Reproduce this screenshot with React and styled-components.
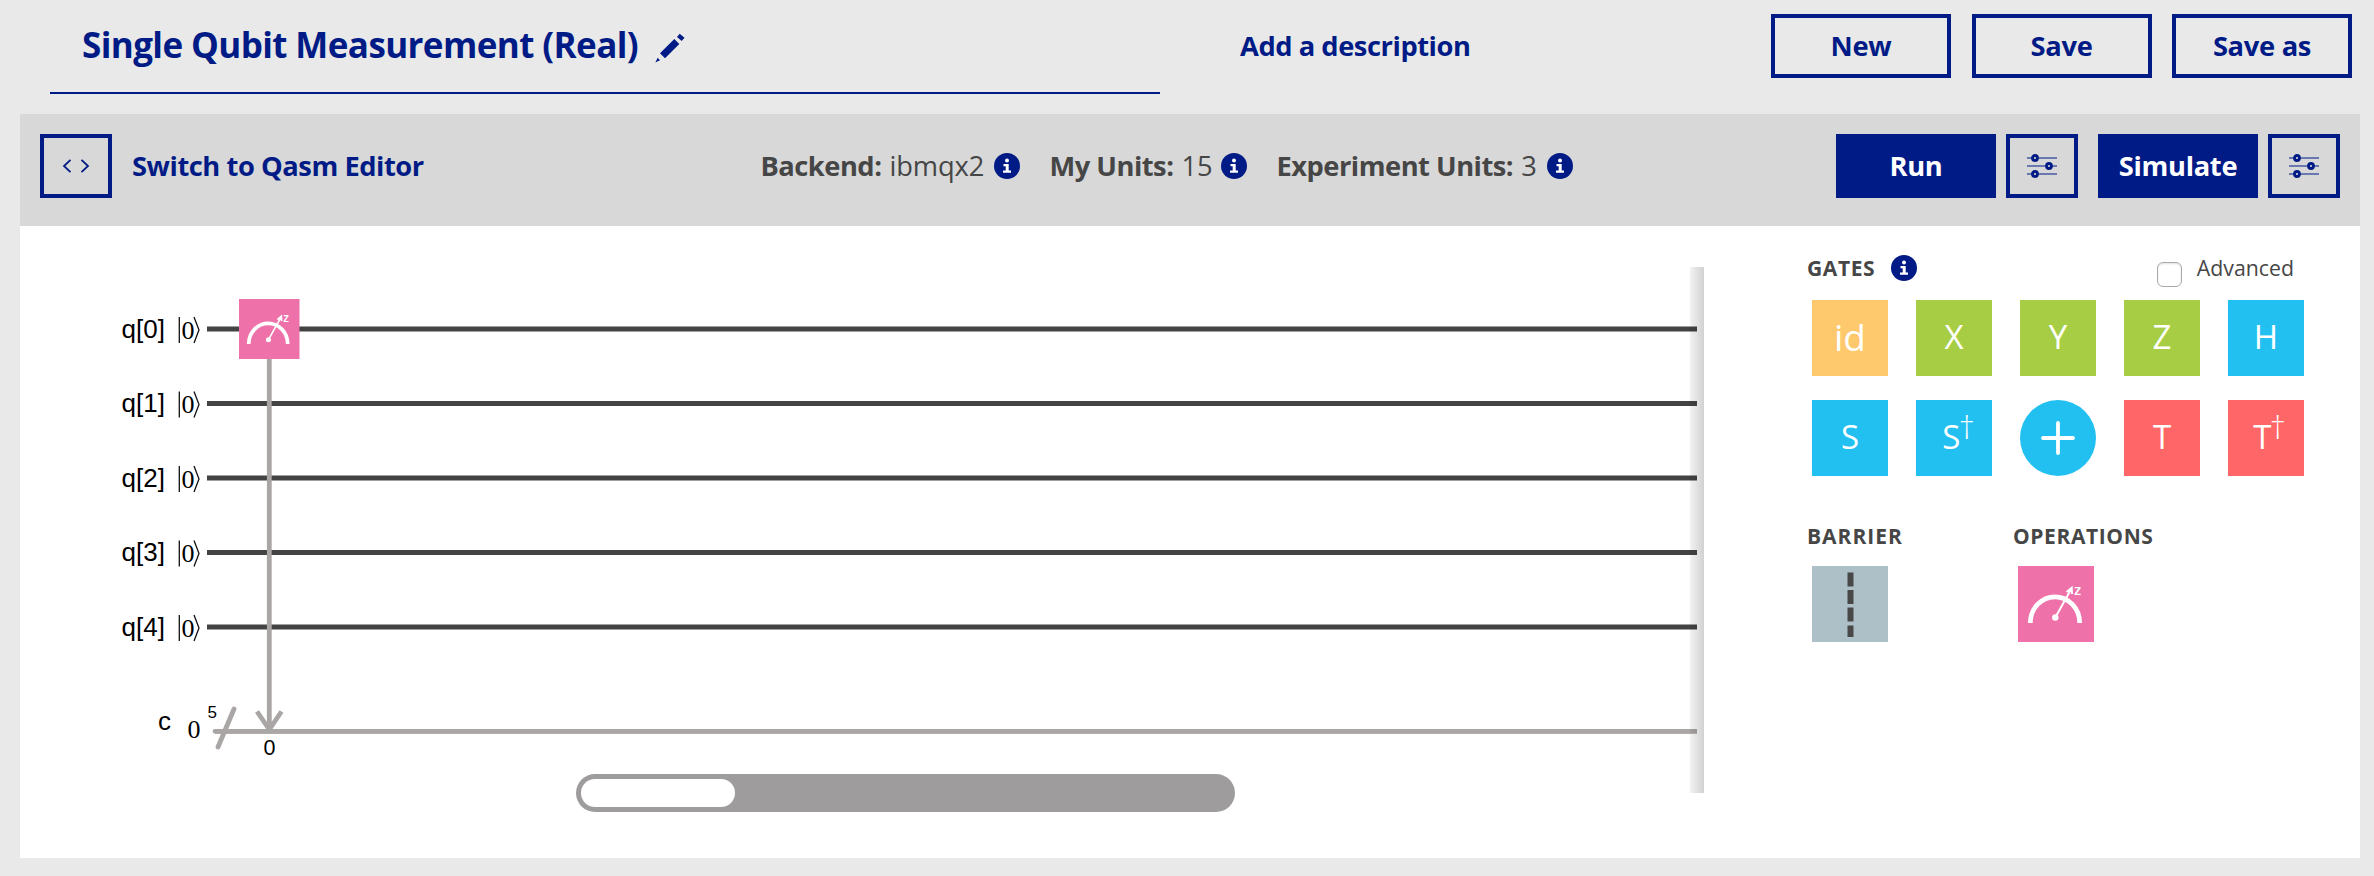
import React from "react";
import styled, { createGlobalStyle } from "styled-components";

const navy = "#001b85";
const ink = "#464646";
const wireGrey = "#aaa6a5";

const GlobalStyle = createGlobalStyle`
  * { box-sizing: border-box; }
  body { margin: 0; background: #e9e9e9; font-family: "Open Sans", "Noto Sans", sans-serif; color: ${ink}; }
  button { font-family: inherit; margin: 0; }
`;

const Page = styled.div`
  width: 2374px;
  height: 876px;
  overflow: hidden;
`;

const Header = styled.header`
  display: flex;
  height: 114px;
  padding: 0 22px 0 50px;
`;

const TitleField = styled.div`
  display: flex;
  align-items: center;
  width: 1110px;
  height: 94px;
  padding: 0 0 4px 32px;
  border-bottom: 2px solid ${navy};
`;

const Title = styled.h1`
  margin: 0 17px 0 0;
  font-size: 35px;
  font-weight: 700;
  letter-spacing: -0.6px;
  color: ${navy};
  white-space: nowrap;
`;

const LinkText = styled.a`
  display: flex;
  align-items: center;
  padding-bottom: 1px;
  font-size: 27.3px;
  font-weight: 700;
  letter-spacing: ${(p) => p.$tracking}px;
  color: ${navy};
  white-space: nowrap;
`;

const Description = styled.div`
  display: flex;
  height: 64px;
  margin: 14px 0 0 80px;
`;

const HeaderActions = styled.div`
  display: flex;
  gap: 20.5px;
  margin: 14px 0 0 auto;
`;

const Button = styled.button`
  display: flex;
  align-items: center;
  justify-content: center;
  width: ${(p) => p.$width}px;
  height: 64px;
  padding: 0 0 1px;
  border: 4px solid ${navy};
  border-radius: 0;
  background: ${(p) => (p.$filled ? navy : "transparent")};
  color: ${(p) => (p.$filled ? "#fff" : navy)};
  font-size: 27.3px;
  font-weight: 700;
  letter-spacing: -0.3px;
  white-space: nowrap;
`;

const IconButton = styled(Button)`
  padding: 0;
`;

const Toolbar = styled.div`
  display: flex;
  align-items: flex-start;
  height: 112px;
  margin: 0 14px 0 20px;
  padding: 20px;
  background: #d8d8d8;
`;

const EditorSwitch = styled.div`
  display: flex;
  gap: 20px;
  width: 720.5px;
  height: 64px;
`;

const Stats = styled.div`
  display: flex;
  gap: 30px;
  height: 64px;
`;

const Stat = styled.div`
  display: flex;
  align-items: center;
  justify-content: space-between;
  width: ${(p) => p.$width}px;
`;

const StatText = styled.span`
  padding-bottom: 1px;
  font-size: 27.3px;
  font-weight: 400;
  letter-spacing: -0.1px;
  white-space: nowrap;
`;

const StatLabel = styled.b`
  font-weight: 700;
  letter-spacing: -0.5px;
  margin-right: 8px;
`;

const RunActions = styled.div`
  display: flex;
  gap: 10px;
  margin-left: auto;
`;

const RunGroup = styled.div`
  display: flex;
  gap: 10px;
  & + & { margin-left: 10px; }
`;

const Panel = styled.main`
  display: flex;
  height: 632px;
  margin: 0 14px 0 20px;
  background: #fff;
`;

const CircuitArea = styled.section`
  position: relative;
  width: 1684px;
`;

const CircuitSvg = styled.svg`
  display: block;
`;

const EdgeShadow = styled.div`
  position: absolute;
  top: 41px;
  right: 0;
  width: 14px;
  height: 526px;
  background: linear-gradient(to right, rgba(0, 0, 0, 0.05), rgba(0, 0, 0, 0.18));
`;

const ScrollTrack = styled.div`
  width: 659px;
  height: 38px;
  margin-left: 556px;
  padding: 5px;
  border-radius: 19px;
  background: #9e9c9d;
`;

const ScrollThumb = styled.div`
  width: 154px;
  height: 28px;
  border-radius: 14px;
  background: #fff;
`;

const Palette = styled.aside`
  padding: 29px 0 0 103px;
`;

const PaletteHeader = styled.div`
  display: flex;
  align-items: flex-start;
  width: 487px;
  height: 26px;
`;

const Heading = styled.h2`
  width: ${(p) => p.$width}px;
  margin: 0;
  font-size: 21px;
  font-weight: 700;
  line-height: 26px;
  letter-spacing: ${(p) => p.$tracking}px;
`;

const AdvancedToggle = styled.label`
  display: flex;
  gap: 15px;
  margin-left: auto;
  font-size: 21.3px;
  font-weight: 400;
  line-height: 26px;
`;

const CheckBox = styled.span`
  width: 25px;
  height: 25px;
  margin-top: 7px;
  border: 1.5px solid #a9a9a9;
  border-radius: 6px;
  background: #fff;
  box-shadow: inset 0 1px 2px rgba(0, 0, 0, 0.12);
`;

const GateGrid = styled.div`
  display: grid;
  grid-template-columns: repeat(5, 76px);
  gap: 24px 28px;
  padding: 19px 0 0 5px;
`;

const Gate = styled.div`
  display: flex;
  align-items: center;
  justify-content: center;
  width: 76px;
  height: 76px;
  padding-bottom: ${(p) => p.$lift || 0}px;
  border-radius: ${(p) => (p.$round ? "50%" : "0")};
  background: ${(p) => p.$color};
  color: #fff;
  font-size: ${(p) => p.$size || 33}px;
  line-height: 1;
`;

const Dagger = styled.span`
  margin: -19px ${(p) => p.$overhang}px 0 -1.5px;
  font-size: 32px;
  font-weight: 300;
`;

const PaletteGroups = styled.div`
  display: flex;
  margin-top: 47px;
`;

const PaletteGroup = styled.div`
  width: 206px;
`;

const GateSlot = styled.div`
  padding: 17px 0 0 5px;
`;

const PencilIcon = () => (
  <svg width="32" height="38" viewBox="0 0 32 38" fill={navy}>
    <path d="M5 28.300 19.300 14 24.300 19 10 33.300ZM22 12 24.700 8.700 29.500 12.700 26.700 15.900ZM2.700 32.800 5 35.300.3 37.500Z" />
  </svg>
);

const InfoIcon = () => (
  <svg width="26" height="26" viewBox="0 0 26 26">
    <circle cx="13" cy="13" r="13" fill={navy} />
    <circle cx="13" cy="7.500" r="2" fill="#fff" />
    <path d="M9.500 11H14.700V17.500H17V19.700H9V17.500H11.700V13.200H9.500Z" fill="#fff" />
  </svg>
);

const CodeIcon = () => (
  <svg width="28" height="14" viewBox="0 0 28 14" fill="none" stroke={navy} strokeWidth="1.800">
    <path d="M8.500 .8 2 7 8.500 13.200M19.500 .8 26 7 19.500 13.200" />
  </svg>
);

const SlidersIcon = () => (
  <svg width="30" height="24" viewBox="0 0 30 24">
    <path d="M0 4H30M0 12H30M0 20H30" stroke="#6a78b2" strokeWidth="2" />
    <g fill="#d8d8d8" stroke={navy} strokeWidth="2.800">
      <circle cx="8" cy="4" r="2.500" />
      <circle cx="22" cy="12" r="2.500" />
      <circle cx="8" cy="20" r="2.500" />
    </g>
  </svg>
);

const PlusIcon = () => (
  <svg width="34" height="34" viewBox="0 0 34 34" stroke="#fff" strokeWidth="3.800" strokeLinecap="round">
    <path d="M2 17H32M17 2V32" />
  </svg>
);

const BarrierIcon = () => (
  <svg width="76" height="76" viewBox="0 0 76 76">
    <path d="M38.500 6.500V20.500M38.500 24V38M38.500 41.500V55.500M38.500 59.500V71" stroke="#484848" strokeWidth="6" />
  </svg>
);

const MeterShape = () => (
  <>
    <path d="M12.300 57A24.700 26.200 0 0 1 61.700 57" fill="none" stroke="#fff" strokeWidth="4.700" />
    <path d="M37.300 51.500 53.500 22.500M48.500 26 53.700 21.800 54 28" fill="none" stroke="#fff" strokeWidth="2" />
    <circle cx="37.300" cy="51.500" r="3.200" fill="#fff" />
    <text x="56" y="28.800" fill="#fff" fontFamily="Open Sans, sans-serif" fontWeight="600" fontSize="15">z</text>
  </>
);

const MeterIcon = () => (
  <svg width="76" height="76" viewBox="0 0 76 76">
    <MeterShape />
  </svg>
);

const wires = [329, 403.5, 478, 552.5, 627];
const sans = '"Liberation Sans", Arial, sans-serif';
const serif = '"Liberation Serif", "Times New Roman", serif';

const Wire = ({ index, y }) => (
  <g>
    <text x="121.500" y={y + 8.5} fontFamily={sans} fontSize="26" fill="#000">{`q[${index}]`}</text>
    <path d={`M179.300 ${y - 12}V${y + 14}M194 ${y - 12}L199 ${y + 1}L194 ${y + 14}`} fill="none" stroke="#111" strokeWidth="1.300" />
    <text x="181.600" y={y + 9.5} fontFamily={serif} fontSize="26" fill="#000">0</text>
    <path d={`M207 ${y}H1697`} stroke="#434343" strokeWidth="4.800" />
  </g>
);

const Circuit = () => (
  <CircuitSvg width="1684" height="548" viewBox="20 226 1684 548">
    {wires.map((y, i) => <Wire key={y} index={i} y={y} />)}
    <text x="158" y="729.500" fontFamily={sans} fontSize="26" fill="#000">c</text>
    <text x="187.600" y="738" fontFamily={serif} fontSize="26" fill="#000">0</text>
    <text x="207.500" y="718" fontFamily={sans} fontSize="17" fill="#000">5</text>
    <g fill="none" stroke={wireGrey} strokeWidth="4.800">
      <path d="M215 731.300H1697" />
      <path d="M1690 731.300H215M218 747 234 709" strokeLinecap="round" />
      <path d="M269.300 359V731M257 711.500 269.300 729.500 281.500 711.500" />
    </g>
    <text x="263.600" y="755" fontFamily={sans} fontSize="21.500" fill="#000">0</text>
    <rect x="239" y="299" width="60.500" height="60" fill="#ee72a9" />
    <svg x="239" y="299" width="60" height="60" viewBox="0 0 76 76">
      <MeterShape />
    </svg>
  </CircuitSvg>
);

const green = "#a7cd45";
const blue = "#22c0f1";
const red = "#ff6668";
const pink = "#ee72a9";

export default function App() {
  return (
    <Page>
      <GlobalStyle />
      <Header>
        <TitleField>
          <Title>Single Qubit Measurement (Real)</Title>
          <PencilIcon />
        </TitleField>
        <Description>
          <LinkText $tracking={-0.45}>Add a description</LinkText>
        </Description>
        <HeaderActions>
          <Button $width={180}>New</Button>
          <Button $width={180}>Save</Button>
          <Button $width={180}>Save as</Button>
        </HeaderActions>
      </Header>
      <Toolbar>
        <EditorSwitch>
          <IconButton $width={72}><CodeIcon /></IconButton>
          <LinkText $tracking={-0.45}>Switch to Qasm Editor</LinkText>
        </EditorSwitch>
        <Stats>
          <Stat $width={259}>
            <StatText><StatLabel>Backend:</StatLabel>ibmqx2</StatText>
            <InfoIcon />
          </Stat>
          <Stat $width={197}>
            <StatText><StatLabel>My Units:</StatLabel>15</StatText>
            <InfoIcon />
          </Stat>
          <Stat $width={296}>
            <StatText><StatLabel>Experiment Units:</StatLabel>3</StatText>
            <InfoIcon />
          </Stat>
        </Stats>
        <RunActions>
          <RunGroup>
            <Button $width={160} $filled>Run</Button>
            <IconButton $width={72}><SlidersIcon /></IconButton>
          </RunGroup>
          <RunGroup>
            <Button $width={160} $filled>Simulate</Button>
            <IconButton $width={72}><SlidersIcon /></IconButton>
          </RunGroup>
        </RunActions>
      </Toolbar>
      <Panel>
        <CircuitArea>
          <Circuit />
          <ScrollTrack><ScrollThumb /></ScrollTrack>
          <EdgeShadow />
        </CircuitArea>
        <Palette>
          <PaletteHeader>
            <Heading $width={84} $tracking={0.6}>GATES</Heading>
            <InfoIcon />
            <AdvancedToggle><CheckBox />Advanced</AdvancedToggle>
          </PaletteHeader>
          <GateGrid>
            <Gate $color="#fec86d" $size={37} $lift={3}>id</Gate>
            <Gate $color={green} $lift={4}>X</Gate>
            <Gate $color={green} $lift={4}>Y</Gate>
            <Gate $color={green} $lift={4}>Z</Gate>
            <Gate $color={blue} $lift={4}>H</Gate>
            <Gate $color={blue} $lift={4}>S</Gate>
            <Gate $color={blue} $lift={4}>S<Dagger $overhang={-9}>†</Dagger></Gate>
            <Gate $color={blue} $round><PlusIcon /></Gate>
            <Gate $color={red} $lift={4}>T</Gate>
            <Gate $color={red} $lift={4}>T<Dagger $overhang={-7}>†</Dagger></Gate>
          </GateGrid>
          <PaletteGroups>
            <PaletteGroup>
              <Heading $tracking={1}>BARRIER</Heading>
              <GateSlot><Gate $color="#adc0c7"><BarrierIcon /></Gate></GateSlot>
            </PaletteGroup>
            <PaletteGroup>
              <Heading $tracking={0.6}>OPERATIONS</Heading>
              <GateSlot><Gate $color={pink}><MeterIcon /></Gate></GateSlot>
            </PaletteGroup>
          </PaletteGroups>
        </Palette>
      </Panel>
    </Page>
  );
}
